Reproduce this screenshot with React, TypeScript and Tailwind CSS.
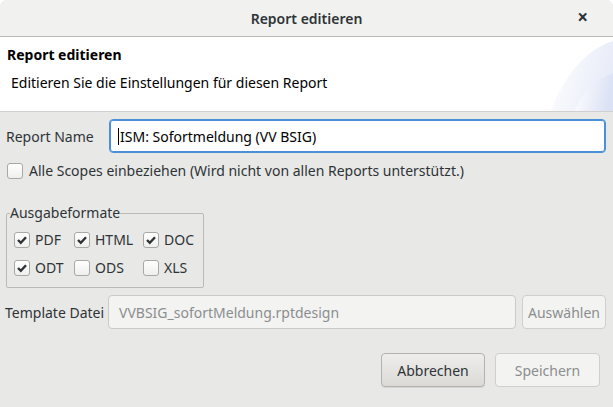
const formats = [
  [
    { label: "PDF", checked: true, w: "w-[60px]" },
    { label: "HTML", checked: true, w: "w-[69px]" },
    { label: "DOC", checked: true, w: "w-auto" },
  ],
  [
    { label: "ODT", checked: true, w: "w-[60px]" },
    { label: "ODS", checked: false, w: "w-[69px]" },
    { label: "XLS", checked: false, w: "w-auto" },
  ],
];

function Checkbox({ checked }: { checked: boolean }) {
  return (
    <span className="flex h-4 w-4 shrink-0 items-center justify-center rounded-[3px] border border-[#a8a8a4] bg-gradient-to-b from-white to-[#efefee]">
      {checked && (
        <svg width="12" height="12" viewBox="0 0 12 12">
          <path d="M2 6 L4.8 8.8 L10 3.2" fill="none" stroke="#2e3436" strokeWidth="2.4" />
        </svg>
      )}
    </span>
  );
}

function Banner() {
  return (
    <svg className="absolute right-0 top-0" width="72" height="74" viewBox="0 0 72 74">
      <defs>
        <linearGradient id="bg1" x1="0" y1="0" x2="1" y2="0.3">
          <stop offset="0" stopColor="#ffffff" />
          <stop offset="1" stopColor="#e8ecf8" />
        </linearGradient>
        <linearGradient id="bg2" x1="0" y1="0" x2="1" y2="0.2">
          <stop offset="0" stopColor="#ffffff" />
          <stop offset="1" stopColor="#dce2f5" />
        </linearGradient>
      </defs>
      <path d="M10 74 C 22 40, 45 12, 72 4 L72 74 Z" fill="url(#bg1)" />
      <path d="M34 74 C 40 55, 55 42, 72 36 L72 74 Z" fill="url(#bg2)" />
    </svg>
  );
}

export default function App() {
  return (
    <div className="h-[407px] w-[613px] bg-white font-['Noto_Sans',sans-serif] text-[14px] text-[#2e3436]">
      <div className="flex h-full flex-col overflow-hidden rounded-t-[7px] bg-[#e8e8e7]">
        {/* title bar */}
        <div className="relative flex h-[37px] shrink-0 items-center justify-center border-b border-[#bdb9b4] bg-[#f1f1f0]">
          <span className="font-semibold">Report editieren</span>
          <span className="absolute right-[25px] top-[8px] text-[19px] font-bold leading-none">×</span>
        </div>

        {/* header */}
        <div className="relative h-[75px] shrink-0 border-b border-[#d2d0cd] bg-white">
          <Banner />
          <div className="relative px-[7px] pt-[7px] font-bold text-black">Report editieren</div>
          <div className="relative px-[11px] pt-[7px] text-black">Editieren Sie die Einstellungen für diesen Report</div>
        </div>

        {/* body */}
        <div className="flex flex-1 flex-col pl-[6px] pr-[7px] pt-[7px]">
          <div className="flex h-[34px] items-center">
            <span className="w-[103px] shrink-0 whitespace-nowrap">Report Name</span>
            <div className="flex h-[34px] flex-1 items-center rounded-[4px] border border-[#4a90d9] bg-white pl-[8px] shadow-[inset_0_0_0_1px_#4a90d9]">
              <span className="mr-px h-[17px] w-px bg-black" />
              <span className="text-black">ISM: Sofortmeldung (VV BSIG)</span>
            </div>
          </div>

          <div className="mt-[7px] flex items-center gap-[6px] pl-px">
            <Checkbox checked={false} />
            <span>Alle Scopes einbeziehen (Wird nicht von allen Reports unterstützt.)</span>
          </div>

          <fieldset className="mt-[23px] w-[198px] rounded-[2px] border border-[#bdbab6] pb-[9px] pl-[7px] pt-[7px]">
            <legend className="-ml-[4px] px-0 leading-[18px]">Ausgabeformate</legend>
            <div className="flex flex-col gap-[7px]">
              {formats.map((row, i) => (
                <div key={i} className="flex items-center">
                  {row.map((f) => (
                    <div key={f.label} className={`flex items-center gap-[5px] ${f.w}`}>
                      <Checkbox checked={f.checked} />
                      <span>{f.label}</span>
                    </div>
                  ))}
                </div>
              ))}
            </div>
          </fieldset>

          <div className="mt-[7px] flex h-[34px] items-center">
            <span className="-ml-px w-[103px] shrink-0 whitespace-nowrap">Template Datei</span>
            <div className="flex h-[34px] flex-1 items-center rounded-[4px] border border-[#cdc9c4] bg-[#f3f3f2] pl-[10px] text-[#8b8e8f]">
              VVBSIG_sofortMeldung.rptdesign
            </div>
            <div className="ml-[6px] flex h-[34px] w-[84px] items-center justify-center rounded-[4px] border border-[#d2cec9] bg-[#f3f3f2] text-[#8b8e8f]">
              Auswählen
            </div>
          </div>

          <div className="mt-[24px] flex justify-end gap-[10px] pr-[6px]">
            <div className="flex h-[34px] w-[104px] items-center justify-center rounded-[4px] border border-[#b5b1ac] bg-gradient-to-b from-[#eeedec] to-[#dcdad7] shadow-[0_1px_0_rgba(0,0,0,0.08)]">
              Abbrechen
            </div>
            <div className="flex h-[34px] w-[105px] items-center justify-center rounded-[4px] border border-[#d2cec9] bg-[#f3f3f2] text-[#8b8e8f]">
              Speichern
            </div>
          </div>
        </div>
      </div>
    </div>
  );
}
